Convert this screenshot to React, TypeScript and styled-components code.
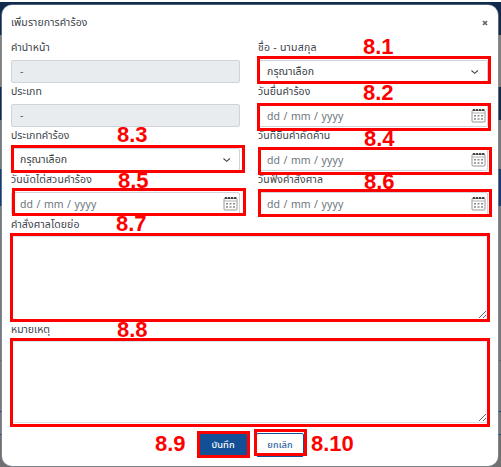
import React from "react";
import styled, { createGlobalStyle } from "styled-components";

const Global = createGlobalStyle`
  * { box-sizing: border-box; }
  body { margin: 0; background: #fff; overflow: hidden; }
  button, textarea { font: inherit; }
`;

const thai = `"Noto Sans Thai", "Prompt", "Kanit", "Sarabun", "Noto Sans", sans-serif`;

const Page = styled.div`
  position: relative;
  width: 501px;
  height: 467px;
  padding: 5px 3px 1px 2px;
  font-family: ${thai};
  color: #3d444b;
  background: linear-gradient(
    #fff 0 2px, #122b4d 2px 35px, #827e7c 35px 87px, #122b4d 87px 120px,
    #77797c 120px 169px, #173d70 169px 206px, #77797c 206px 360px,
    #666 360px 361px, #77797c 361px 411px, #254466 411px 412px,
    #77797c 412px 434px, #254466 434px 435px, #707070 435px
  );
`;

const Modal = styled.main`
  display: flex;
  flex-direction: column;
  height: 461px;
  padding: 0 9px 0 9px;
  border-radius: 10px;
  background: #fff;
  box-shadow: 0 0 0 0.6px #8995a5;
`;

const Header = styled.header`
  display: flex;
  justify-content: space-between;
  align-items: center;
  height: 34px;
  padding-top: 2px;
`;

const Text = styled.span<{ $spacing?: number }>`
  display: block;
  font-size: 10.5px;
  line-height: 16px;
  white-space: nowrap;
  letter-spacing: ${(p) => p.$spacing ?? 0.08}px;
`;

const Close = styled.button`
  display: flex;
  padding: 0;
  border: 0;
  margin-right: 1px;
  background: none;
`;

const Grid = styled.div`
  display: grid;
  grid-template-columns: 229px 230px;
  column-gap: 18px;
  grid-auto-rows: 44px;
`;

const Cell = styled.div`
  display: flex;
  flex-direction: column;
`;

const LabelRow = styled.label`
  display: flex;
  align-items: center;
  height: 21px;
  padding-bottom: 2px;
`;

const Control = styled.div<{ $off?: boolean }>`
  display: flex;
  align-items: center;
  justify-content: space-between;
  height: 24px;
  padding: 1px 1px 0 8px;
  border: 1px solid #ced4da;
  border-radius: 2px;
  background: ${(p) => (p.$off ? "#e9ecef" : "#fff")};
  color: ${(p) => (p.$off ? "#555c63" : "#343a40")};
`;

const DateText = styled.span`
  font-family: "Noto Sans", sans-serif;
  font-size: 10.5px;
  line-height: 16px;
  letter-spacing: 0.12px;
  word-spacing: 0.5px;
  color: #6c757d;
  white-space: nowrap;
`;

const Area = styled.textarea<{ $h: number }>`
  display: block;
  width: 477px;
  height: ${(p) => p.$h}px;
  border: 1px solid #dbe4ee;
  border-radius: 2px;
  resize: vertical;
`;

const Section = styled.section<{ $h: number }>`
  height: ${(p) => p.$h}px;
`;

const Actions = styled.footer`
  display: flex;
  gap: 9px;
  padding: 9px 0 0 188px;
`;

const Action = styled.button<{ $primary?: boolean }>`
  display: flex;
  align-items: center;
  justify-content: center;
  width: 48px;
  height: 24px;
  padding: 0;
  border: 1px solid #134f96;
  border-radius: 2px;
  background: ${(p) => (p.$primary ? "#134f96" : "#fff")};
  color: ${(p) => (p.$primary ? "#fff" : "#2d639f")};
`;

const ActionText = styled(Text)`
  font-size: 9.3px;
  font-weight: 500;
`;

const Frame = styled.div<{ $x: number; $y: number; $w: number; $h: number }>`
  position: absolute;
  left: ${(p) => p.$x}px;
  top: ${(p) => p.$y}px;
  width: ${(p) => p.$w}px;
  height: ${(p) => p.$h}px;
  border: 3px solid #f00;
  pointer-events: none;
`;

const Mark = styled.span<{ $x: number; $y: number }>`
  position: absolute;
  left: ${(p) => p.$x}px;
  top: ${(p) => p.$y}px;
  font: bold 22px/22px "Liberation Sans", sans-serif;
  color: #f00;
`;

const Calendar = () => (
  <svg width="15" height="15" viewBox="0 0 15 15" fill="none">
    <rect x="1" y="2.5" width="13" height="11.5" rx="1" stroke="#8a8a8a" strokeWidth="0.9" />
    <path d="M1.5 5H13.5" stroke="#999" strokeWidth="0.8" />
    <path d="M1.8 2h2.4M5 2h2.2M8 2h2.2M11 2h2.4" stroke="#444" strokeWidth="1.8" />
    <path d="M3 7.8h2M6.5 7.8h2M10 7.8h2M3 11h2M6.5 11h2M10 11h2" stroke="#888" strokeWidth="1.5" />
  </svg>
);

const Chevron = () => (
  <svg width="16" height="10" viewBox="0 0 16 10" fill="none">
    <path d="M1.5 3.5L4.7 6.3L7.9 3.5" stroke="#444" strokeWidth="1.1" />
  </svg>
);

type Field = { label: string; spacing?: number; kind: "off" | "select" | "date" };

const fields: Field[] = [
  { label: "คำนำหน้า", spacing: 0.15, kind: "off" },
  { label: "ชื่อ - นามสกุล", spacing: 0.25, kind: "select" },
  { label: "ประเภท", spacing: 0, kind: "off" },
  { label: "วันยื่นคำร้อง", kind: "date" },
  { label: "ประเภทคำร้อง", spacing: 0, kind: "select" },
  { label: "วันที่ยื่นคำคัดค้าน", kind: "date" },
  { label: "วันนัดไต่สวนคำร้อง", spacing: 0.12, kind: "date" },
  { label: "วันฟังคำสั่งศาล", spacing: 0.15, kind: "date" },
];

const frames = [
  [257, 56, 234, 28], [257, 103, 234, 28], [11, 145, 234, 28], [258, 147, 234, 28],
  [12, 188, 234, 28], [258, 189, 234, 28], [10, 233, 480, 89], [10, 338, 480, 89],
  [197, 431, 53, 27], [254, 429, 53, 27],
];

const marks: [string, number, number][] = [
  ["8.1", 363, 36], ["8.2", 363, 82], ["8.3", 117, 124], ["8.4", 364, 128],
  ["8.5", 118, 170], ["8.6", 364, 171], ["8.7", 116, 213], ["8.8", 117, 319],
  ["8.9", 155, 433], ["8.10", 311, 433],
];

const FieldCell = ({ field }: { field: Field }) => (
  <Cell>
    <LabelRow><Text $spacing={field.spacing}>{field.label}</Text></LabelRow>
    <Control $off={field.kind === "off"}>
      {field.kind === "off" && <Text>-</Text>}
      {field.kind === "select" && <><Text>กรุณาเลือก</Text><Chevron /></>}
      {field.kind === "date" && <><DateText>dd / mm / yyyy</DateText><Calendar /></>}
    </Control>
  </Cell>
);

export default function App() {
  return (
    <>
      <Global />
      <Page>
        <Modal>
          <Header>
            <Text>เพิ่มรายการคำร้อง</Text>
            <Close aria-label="ปิด">
              <svg width="6" height="6" viewBox="0 0 6 6">
                <path d="M1 1L5 5M5 1L1 5" stroke="#666" strokeWidth="1.7" />
              </svg>
            </Close>
          </Header>
          <Grid>
            {fields.map((f) => <FieldCell key={f.label} field={f} />)}
          </Grid>
          <Section $h={105}>
            <LabelRow><Text $spacing={0.12}>คำสั่งศาลโดยย่อ</Text></LabelRow>
            <Area $h={84} />
          </Section>
          <Section $h={104}>
            <LabelRow><Text $spacing={0}>หมายเหตุ</Text></LabelRow>
            <Area $h={82} />
          </Section>
          <Actions>
            <Action $primary><ActionText>บันทึก</ActionText></Action>
            <Action><ActionText>ยกเลิก</ActionText></Action>
          </Actions>
        </Modal>
        {frames.map(([x, y, w, h]) => <Frame key={`${x}-${y}`} $x={x} $y={y} $w={w} $h={h} />)}
        {marks.map(([t, x, y]) => <Mark key={t} $x={x} $y={y}>{t}</Mark>)}
      </Page>
    </>
  );
}
